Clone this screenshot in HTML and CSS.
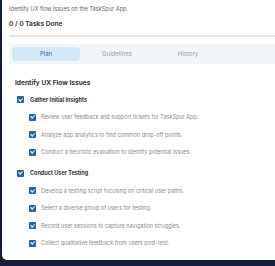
FILE: index.html
```html
<!DOCTYPE html>
<html lang="en">
<head>
    <meta charset="UTF-8">
    <meta name="viewport" content="width=device-width, initial-scale=1.0">
    <title>TaskSpur Plan</title>
    <link rel="stylesheet" href="styles.css">
</head>
<body>
    <div class="card">
        <p class="goal">Identify UX flow issues on the TaskSpur App.</p>
        <p class="count">0 / 0 Tasks Done</p>
        <div class="progress"></div>

        <div class="tabs">
            <div class="tab active">Plan</div>
            <div class="tab">Guidelines</div>
            <div class="tab">History</div>
        </div>

        <div class="plan">
            <h3 class="plan-title">Identify UX Flow Issues</h3>

            <div class="group">
                <label class="item main"><span class="box"></span>Gather Initial Insights</label>
                <label class="item sub"><span class="box"></span>Review user feedback and support tickets for TaskSpur App.</label>
                <label class="item sub"><span class="box"></span>Analyze app analytics to find common drop-off points.</label>
                <label class="item sub"><span class="box"></span>Conduct a heuristic evaluation to identify potential issues.</label>
            </div>

            <div class="group">
                <label class="item main"><span class="box"></span>Conduct User Testing</label>
                <label class="item sub"><span class="box"></span>Develop a testing script focusing on critical user paths.</label>
                <label class="item sub"><span class="box"></span>Select a diverse group of users for testing.</label>
                <label class="item sub"><span class="box"></span>Record user sessions to capture navigation struggles.</label>
                <label class="item sub"><span class="box"></span>Collect qualitative feedback from users post-test.</label>
            </div>
        </div>
    </div>
</body>
</html>
```

FILE: styles.css
```css
body {
    margin: 0;
    background: #121f3b;
    font-family: "Inter", "Noto Sans", sans-serif;
    overflow: hidden;
}
.card {
    margin-left: 2px;
    height: 260px;
    background: #fff;
    border-bottom-left-radius: 5px;
    padding: 5px 0 0 7px;
    box-sizing: border-box;
    overflow: hidden;
}
.goal {
    margin: 0;
    font-size: 5.6px;
    line-height: 8px;
    color: #666;
}
.count {
    margin: 7px 0 0 0;
    font-size: 6.6px;
    line-height: 9px;
    font-weight: 700;
    color: #444;
}
.progress {
    margin-top: 6px;
    height: 2px;
    background: #e2e4e6;
}
.tabs {
    display: flex;
    gap: 3px;
    margin-top: 7px;
    padding: 3px 3px;
    background: #f3f6f9;
}
.tab {
    width: 68px;
    height: 14px;
    line-height: 14px;
    text-align: center;
    font-size: 6px;
    color: #9a9a9a;
    border-radius: 4px;
}
.tab.active {
    background: #d5e8f8;
    color: #2f6cad;
}
.plan {
    padding-left: 6px;
}
.plan-title {
    margin: 15px 0 0 0;
    font-size: 6.6px;
    line-height: 9px;
    font-weight: 700;
    color: #333;
}
.group {
    margin-top: 7px;
}
.group + .group {
    margin-top: 12px;
}
.item {
    display: flex;
    align-items: center;
    height: 9px;
    font-size: 5.5px;
}
.item.main {
    padding-left: 2px;
    font-weight: 700;
    color: #333;
}
.item.sub {
    margin-top: 8.5px;
    padding-left: 14px;
    color: #8c8c8c;
}
.box {
    position: relative;
    width: 7px;
    height: 7px;
    margin-right: 6px;
    border-radius: 1px;
    background: #2464a9;
    flex-shrink: 0;
}
.item.sub .box {
    margin-right: 5px;
}
.box::after {
    content: "";
    position: absolute;
    left: 2px;
    top: 0.6px;
    width: 1.6px;
    height: 3.4px;
    border: solid #fff;
    border-width: 0 1px 1px 0;
    transform: rotate(45deg);
}
```
